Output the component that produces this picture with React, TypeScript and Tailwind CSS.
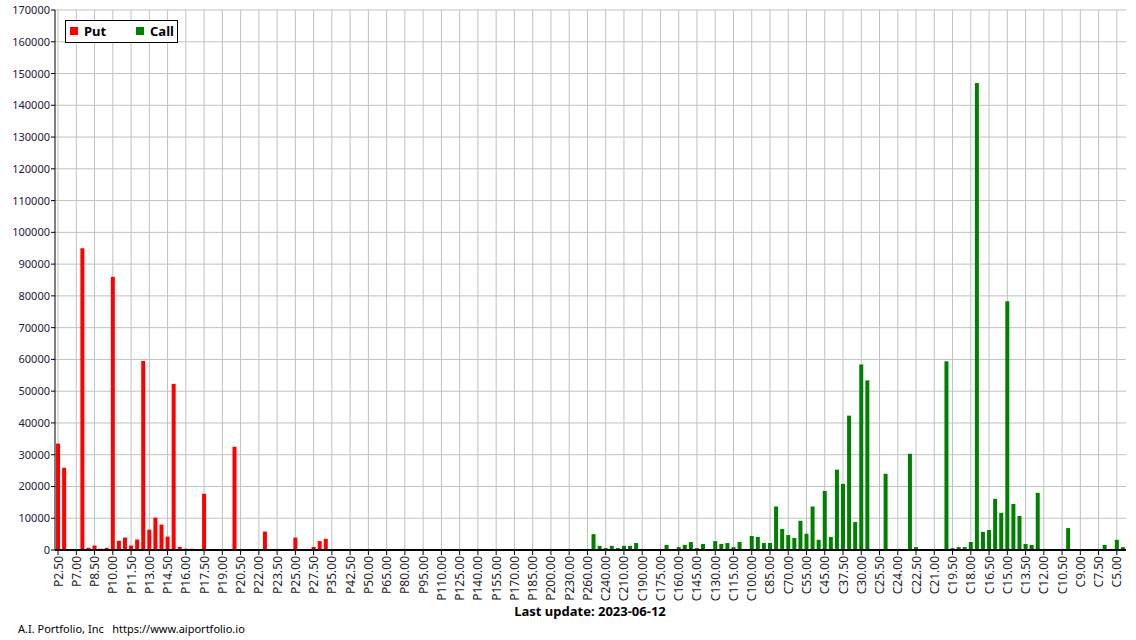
const labels = "P2.50,P7.00,P8.50,P10.00,P11.50,P13.00,P14.50,P16.00,P17.50,P19.00,P20.50,P22.00,P23.50,P25.00,P27.50,P35.00,P42.50,P50.00,P65.00,P80.00,P95.00,P110.00,P125.00,P140.00,P155.00,P170.00,P185.00,P200.00,P230.00,P260.00,C240.00,C210.00,C190.00,C175.00,C160.00,C145.00,C130.00,C115.00,C100.00,C85.00,C70.00,C55.00,C45.00,C37.50,C30.00,C25.50,C24.00,C22.50,C21.00,C19.50,C18.00,C16.50,C15.00,C13.50,C12.00,C10.50,C9.00,C7.50,C5.00".split(",");

const data: Record<number, number> = {
  0: 33500, 1: 25900, 4: 95000, 5: 700, 6: 1400, 7: 400, 8: 700, 9: 86000, 10: 2900, 11: 3900, 12: 1400, 13: 3300,
  14: 59500, 15: 6400, 16: 10200, 17: 8000, 18: 4200, 19: 52300, 20: 1000, 21: 400, 22: 400, 24: 17700, 29: 32500,
  34: 5800, 39: 3900, 42: 950, 43: 2800, 44: 3500, 45: 300, 47: 300,
  88: 5000, 89: 1300, 90: 600, 91: 1300, 92: 600, 93: 1300, 94: 1300, 95: 2200, 96: 300, 97: 300, 98: 300, 99: 300,
  100: 1600, 102: 900, 103: 1600, 104: 2500, 105: 600, 106: 1900, 107: 300, 108: 2800, 109: 1900, 110: 2200, 111: 900,
  112: 2500, 113: 300, 114: 4400, 115: 4100, 116: 2200, 117: 2200, 118: 13700, 119: 6600, 120: 4700, 121: 3800,
  122: 9200, 123: 5100, 124: 13700, 125: 3200, 126: 18600, 127: 4100, 128: 25300, 129: 20800, 130: 42300, 131: 8800,
  132: 58400, 133: 53400, 136: 24000, 139: 300, 140: 30300, 141: 900, 143: 300, 146: 59400, 147: 600, 148: 900,
  149: 900, 150: 2500, 151: 147000, 152: 5700, 153: 6300, 154: 16100, 155: 11700, 156: 78300, 157: 14500,
  158: 10700, 159: 1900, 160: 1600, 161: 18000, 162: 300, 166: 6900, 170: 300, 171: 300, 172: 1600, 174: 3200, 175: 900,
};

const N = 176;
const X0 = 55;
const PITCH = 6.085;
const Y0 = 550;
const TOP = 10;
const scale = (v: number) => ((Y0 - TOP) * v) / 170000;

export default function App() {
  const yTicks = Array.from({ length: 18 }, (_, i) => i * 10000);
  const right = X0 + N * PITCH;
  return (
    <div className="w-[1136px] h-[640px] bg-white overflow-hidden font-['Liberation_Sans',Arial,sans-serif]">
      <svg width={1136} height={640}>
        {yTicks.map((v) => {
          const y = Y0 - scale(v);
          return (
            <g key={v}>
              {v > 0 && <line x1={X0} x2={right} y1={y} y2={y} stroke="#c0c0c0" strokeWidth={1} />}
              <line x1={X0 - 4} x2={X0} y1={y} y2={y} stroke="#000" strokeWidth={1} />
              <text x={X0 - 5} y={y + 4} textAnchor="end" fontSize={11} fill="#1a2040">{v}</text>
            </g>
          );
        })}
        {labels.map((l, k) => {
          const x = X0 + (3 * k + 0.5) * PITCH;
          return (
            <g key={l}>
              <line x1={x} x2={x} y1={TOP} y2={Y0} stroke="#c0c0c0" strokeWidth={1} />
              <line x1={x} x2={x} y1={Y0} y2={Y0 + 5} stroke="#000" strokeWidth={1} />
              <text x={0} y={0} textAnchor="end" fontSize={12} fill="#222" transform={`translate(${x + 4.5},${Y0 + 6}) rotate(-90)`}>{l}</text>
            </g>
          );
        })}
        {Object.entries(data).map(([k, v]) => {
          const i = Number(k);
          const cx = X0 + (i + 0.5) * PITCH;
          const h = scale(v);
          return <rect key={k} x={cx - 2} y={Y0 - h} width={4} height={h} fill={i < 88 ? "#ff0000" : "#008000"} />;
        })}
        <line x1={X0} x2={X0} y1={TOP} y2={Y0} stroke="#000" strokeWidth={1} />
        <line x1={X0} x2={right} y1={Y0} y2={Y0} stroke="#000" strokeWidth={2} />
        <rect x={65.5} y={20.5} width={112} height={22} fill="#fff" stroke="#000" strokeWidth={1} />
        <rect x={70} y={27} width={8} height={8} fill="#ff0000" />
        <text x={84} y={36} fontSize={13} fontWeight="bold" fill="#000">Put</text>
        <rect x={136} y={27} width={8} height={8} fill="#008000" />
        <text x={150} y={36} fontSize={13} fontWeight="bold" fill="#000">Call</text>
        <text x={590} y={616} textAnchor="middle" fontSize={13} fontWeight="bold" fill="#000">Last update: 2023-06-12</text>
        <text x={18} y={633} fontSize={11} fill="#000" xmlSpace="preserve">A.I. Portfolio, Inc   https://www.aiportfolio.io</text>
      </svg>
    </div>
  );
}
